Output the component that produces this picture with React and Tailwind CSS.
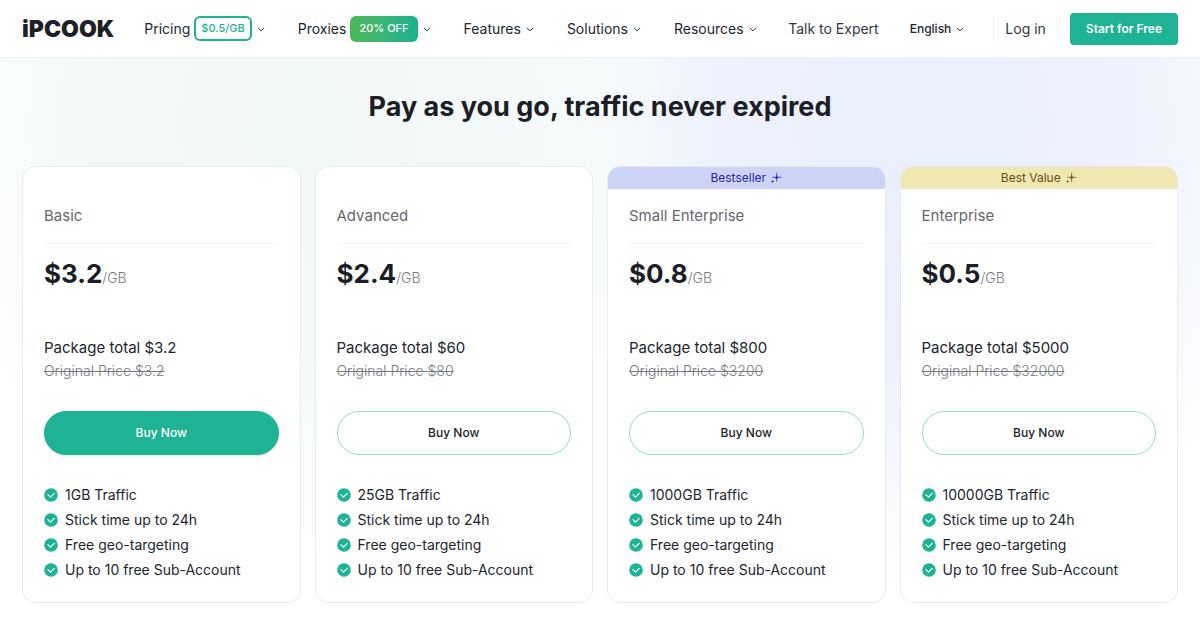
const navItems = [
  { label: 'Pricing', badge: '$0.5/GB', badgeStyle: 'border-2 border-[#1db394] text-[#1db394] bg-white px-[5px] h-[25px] rounded-md' },
  { label: 'Proxies', badge: '20% OFF', badgeStyle: 'bg-linear-to-r from-[#4db856] to-[#1bb192] text-white px-[9px] h-[26px] rounded-md' },
  { label: 'Features' },
  { label: 'Solutions' },
  { label: 'Resources' },
];

const plans = [
  { name: 'Basic', price: '$3.2', total: '$3.2', original: '$3.2', traffic: '1GB', primary: true },
  { name: 'Advanced', price: '$2.4', total: '$60', original: '$80', traffic: '25GB' },
  {
    name: 'Small Enterprise',
    price: '$0.8',
    total: '$800',
    original: '$3200',
    traffic: '1000GB',
    tag: 'Bestseller',
    tagStyle: 'bg-[#cdd3f5] text-[#3023ae]',
  },
  {
    name: 'Enterprise',
    price: '$0.5',
    total: '$5000',
    original: '$32000',
    traffic: '10000GB',
    tag: 'Best Value',
    tagStyle: 'bg-[#f0e7b2] text-[#6b4e12]',
  },
];

function Chevron() {
  return (
    <svg width="8" height="8" viewBox="0 0 8 8" fill="none" aria-hidden="true" className="shrink-0">
      <path d="M1.2 3.2l2.8 2.6 2.8-2.6" stroke="#33363d" strokeWidth="1" strokeLinecap="round" strokeLinejoin="round" />
    </svg>
  );
}

function Sparkle() {
  return (
    <svg width="12" height="12" viewBox="0 0 12 12" fill="currentColor" aria-hidden="true">
      <path d="M6.7 0.6Q6.9 4.6 7.6 4.9L11.6 5.3L7.6 5.7Q6.9 6 6.7 10Q6.4 6 5.8 5.7L2 5.3L5.8 4.9Q6.4 4.6 6.7 0.6Z" stroke="currentColor" strokeWidth="0.3" />
      <path d="M2.6 8l.5 1.1 1.1.5-1.1.5-.5 1.1-.5-1.1L1 9.6l1.1-.5z" />
    </svg>
  );
}

function CheckIcon() {
  return (
    <svg width="14" height="14" viewBox="0 0 14 14" fill="none" aria-hidden="true" className="shrink-0">
      <circle cx="7" cy="7" r="6.8" fill="#1db394" />
      <path d="M3.9 6.7l2.5 2.5 3.9-3.9" stroke="#fff" strokeWidth="1.1" strokeLinecap="round" strokeLinejoin="round" />
    </svg>
  );
}

function Header() {
  return (
    <header className="flex h-[58px] items-center justify-between border-b border-[#eef1f2] bg-white px-[22px]">
      <div className="flex items-center gap-[30px]">
        <a href="#" className="text-[23px] leading-6 font-black text-[#1d1f29]">iPCOOK</a>
        <nav className="flex items-center gap-[33px] text-[14px] text-[#22252d]">
          {navItems.map((item) => (
            <button key={item.label} type="button" className="flex items-center gap-[5px] whitespace-nowrap">
              <span className="flex items-center gap-1">
                {item.label}
                {item.badge && (
                  <span className={`flex items-center text-[11px] font-medium ${item.badgeStyle}`}>{item.badge}</span>
                )}
              </span>
              <Chevron />
            </button>
          ))}
        </nav>
      </div>
      <div className="flex items-center whitespace-nowrap text-[14px] text-[#33363d]">
        <a href="#">Talk to Expert</a>
        <button type="button" className="ml-[31px] flex items-center gap-[5px] text-[12px] font-medium text-[#22252d]">
          English
          <Chevron />
        </button>
        <a href="#" className="ml-[29px] border-l border-[#f0f1f3] py-[2px] pl-[11px]">Log in</a>
        <button type="button" className="ml-6 h-8 rounded-[4px] bg-[#1db394] px-4 text-[12px] font-semibold text-white">
          Start for Free
        </button>
      </div>
    </header>
  );
}

function PlanCard({ plan }) {
  const features = [`${plan.traffic} Traffic`, 'Stick time up to 24h', 'Free geo-targeting', 'Up to 10 free Sub-Account'];

  return (
    <article className="min-w-0 flex-1 overflow-hidden rounded-[13px] border border-[#e8ebec] bg-white">
      <div className={`flex h-[22px] items-center justify-center gap-1 text-[12px] ${plan.tagStyle || ''}`}>
        {plan.tag && (
          <>
            {plan.tag}
            <Sparkle />
          </>
        )}
      </div>
      <div className="px-[21px] pt-[15px] pb-5">
        <h2 className="border-b border-[#f1f2f3] pb-[15px] text-[15px] leading-6 text-[#66686d]">{plan.name}</h2>
        <p className="mt-[10px] text-[26px] leading-10 font-bold text-[#1b1d27]">
          {plan.price}
          <span className="text-[14px] font-light text-[#77797e]">/GB</span>
        </p>
        <p className="mt-[38px] text-[15px] leading-6 text-[#22252d]">Package total {plan.total}</p>
        <p className="text-[14px] leading-[22px] font-light text-[#77797e] line-through">Original Price {plan.original}</p>
        <button
          type="button"
          className={`mt-[29px] h-11 w-full rounded-full border text-[12px] font-medium ${
            plan.primary
              ? 'border-[#1db394] bg-[#1db394] text-white shadow-sm'
              : 'border-[#99d9c9] bg-white text-[#1b1d27]'
          }`}
        >
          Buy Now
        </button>
        <ul className="mt-[27px] text-[14px] leading-[25px] text-[#22252d]">
          {features.map((feature) => (
            <li key={feature} className="flex items-center gap-[7px]">
              <CheckIcon />
              {feature}
            </li>
          ))}
        </ul>
      </div>
    </article>
  );
}

export default function App() {
  return (
    <div className="min-h-screen bg-white font-[Inter,'Liberation_Sans',sans-serif]">
      <Header />
      <main className="bg-[radial-gradient(ellipse_32%_75%_at_25%_12%,#f0f8f6_0%,#f3f9f8_55%,#f3f9f800_100%),radial-gradient(ellipse_32%_82%_at_77%_12%,#e9effb_0%,#edf2fc_55%,#edf2fc00_100%)] px-[22px] pb-6">
        <h1 className="pt-[29px] text-center text-[27px] leading-10 font-bold text-[#1b1d27]">
          Pay as you go, traffic never expired
        </h1>
        <section className="mt-[39px] flex gap-[14px]">
          {plans.map((plan) => (
            <PlanCard key={plan.name} plan={plan} />
          ))}
        </section>
      </main>
    </div>
  );
}
